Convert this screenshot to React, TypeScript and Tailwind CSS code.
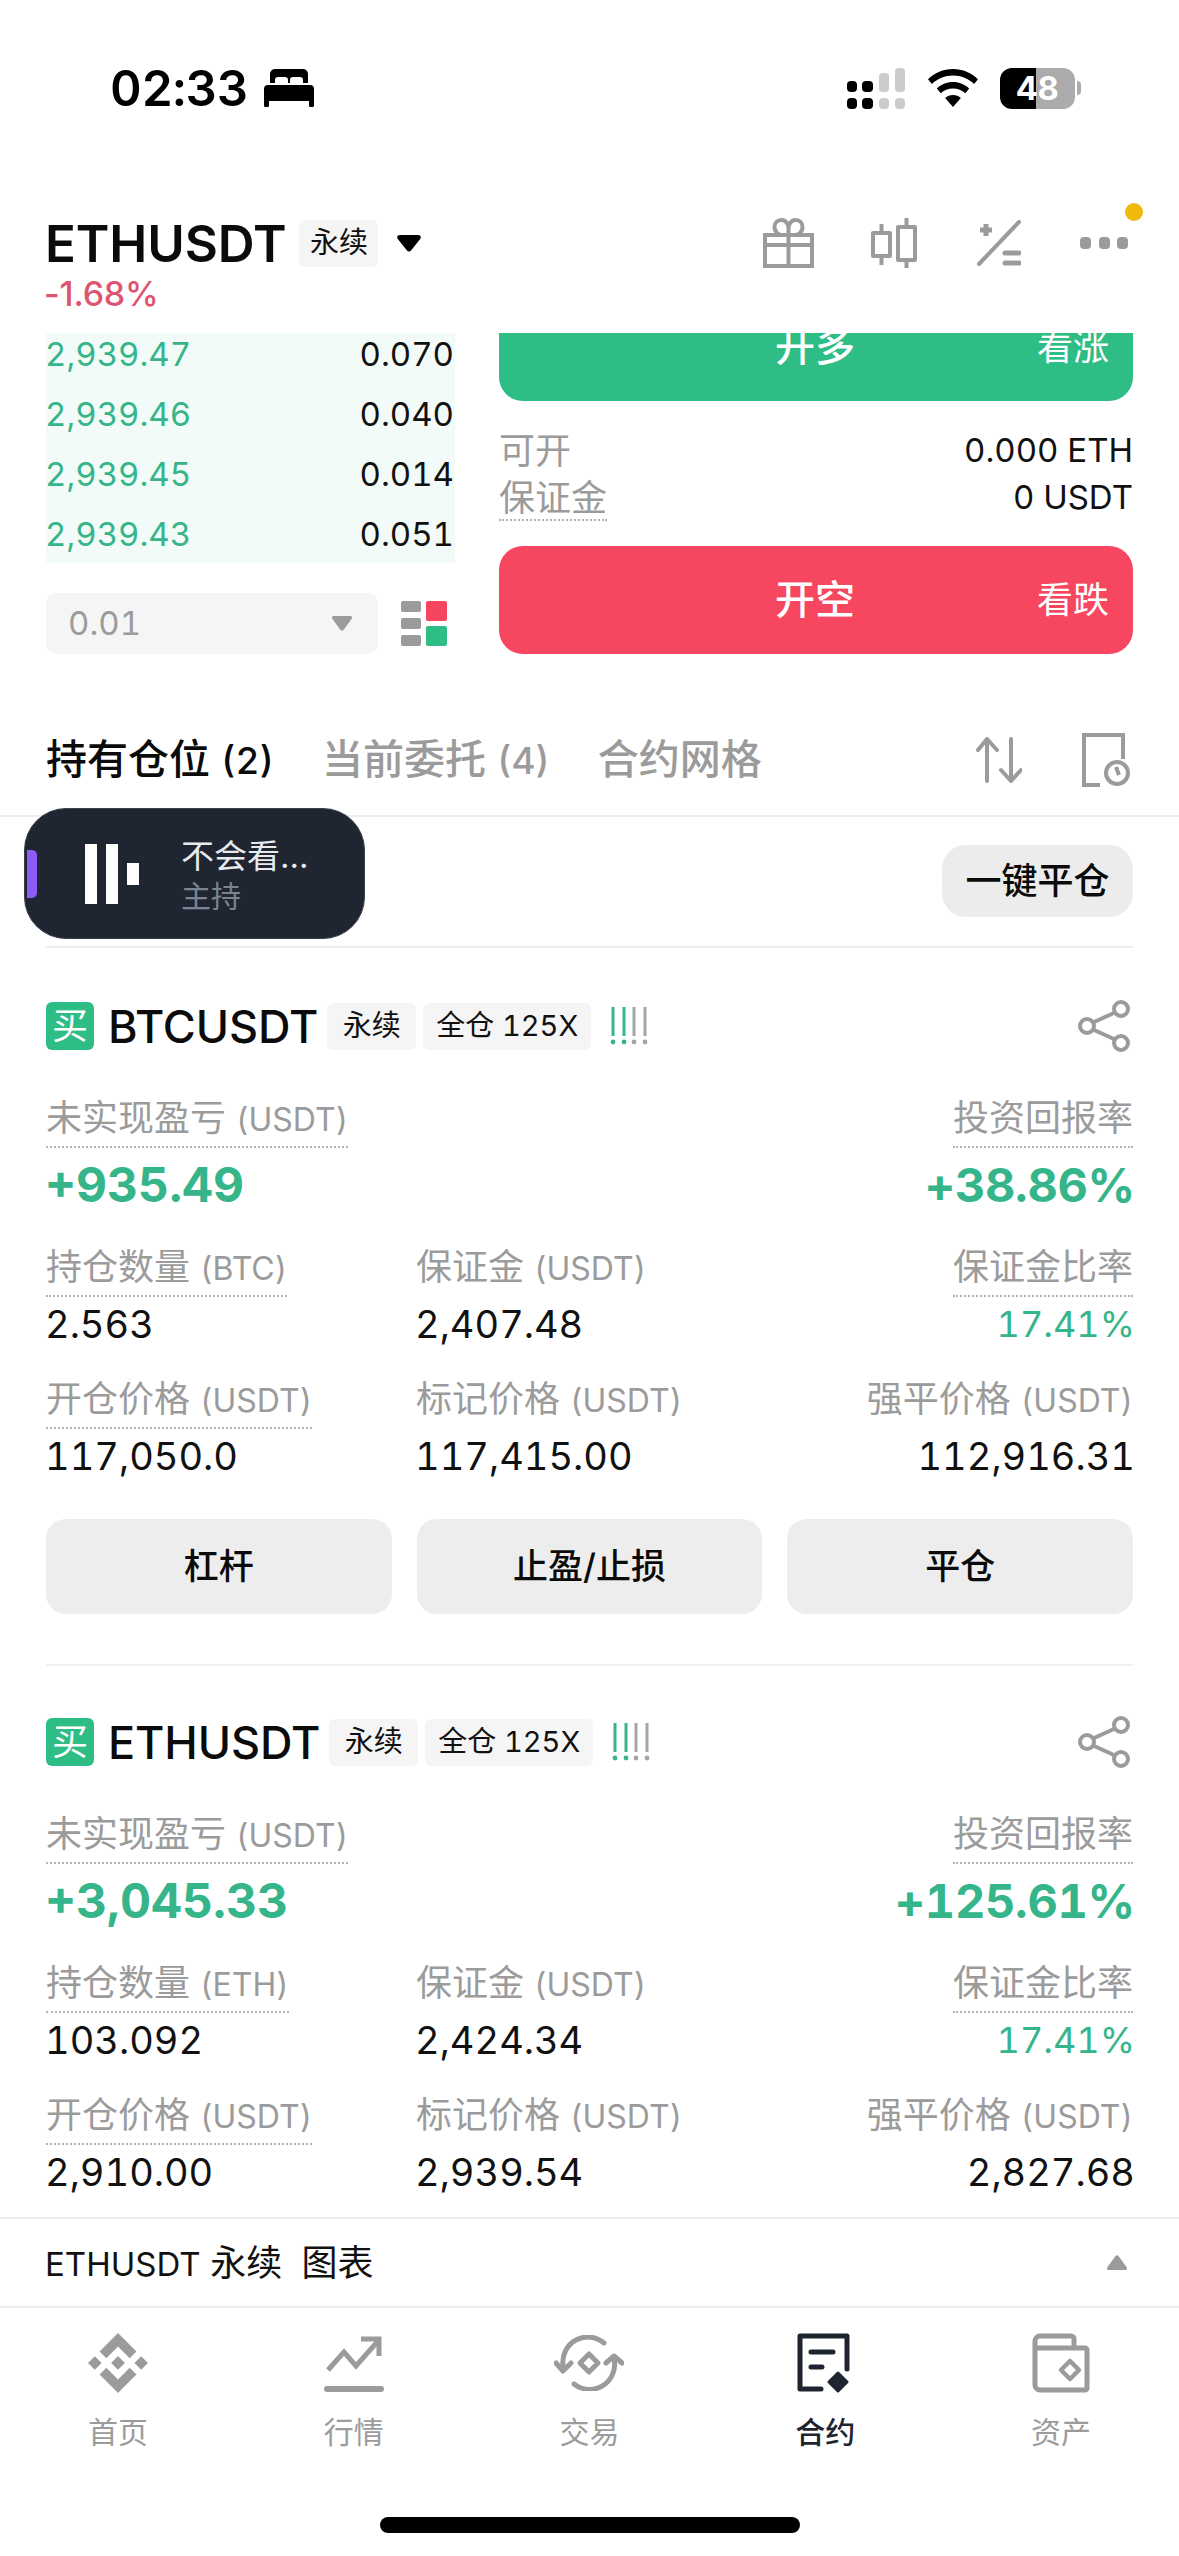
const GREY = '#9b9b9b';

const Tag = ({ children, className = '' }: { children: React.ReactNode; className?: string }) => (
  <span className={`flex h-[47px] items-center justify-center rounded-[6px] bg-[#f5f5f5] text-[29px] text-[#111] ${className}`}>
    {children}
  </span>
);

const Label = ({ text, dotted }: { text: string; dotted?: boolean }) => {
  const [cjk, latin] = text.split(' ');
  return (
    <div className="h-[56px]">
      <span className={`inline-block h-[56px] text-[36px] leading-[52px] whitespace-nowrap text-[#9b9b9b] ${dotted ? 'border-b-2 border-dotted border-[#b4b4b4]' : ''}`}>
        {cjk}
        {latin && <span className="ml-[10px] text-[32px]">{latin}</span>}
      </span>
    </div>
  );
};

const Stat = ({ label, value, dotted, right, green }: { label: string; value: string; dotted?: boolean; right?: boolean; green?: boolean }) => (
  <div className={right ? 'text-right' : ''}>
    <Label text={label} dotted={dotted} />
    <div className={`mt-[4px] h-[46px] leading-[46px] ${right ? '-mr-[2px]' : '-ml-[1px]'} ${green ? 'text-[36px] text-[#35b589]' : 'text-[38px] text-[#111]'}`}>{value}</div>
  </div>
);

function RiskBars() {
  return (
    <svg width="38" height="38" viewBox="0 0 38 38" className="ml-[19px]">
      {[3, 14, 24, 35].map((x, i) => (
        <g key={x} fill={i < 2 ? '#35b589' : '#a5a5a5'} stroke="none">
          <rect x={x - 1.5} y="0" width="3" height="29" />
          <circle cx={x} cy="35" r="2.4" />
        </g>
      ))}
    </svg>
  );
}

function ShareIcon() {
  return (
    <svg width="52" height="52" viewBox="0 0 52 52" fill="none" stroke={GREY} strokeWidth="4">
      <circle cx="43" cy="9" r="7" />
      <circle cx="9" cy="26" r="7" />
      <circle cx="43" cy="43" r="7" />
      <path d="M15 22.5 37 12.5M15 29.5 37 39.5" />
    </svg>
  );
}

function PositionCard({ symbol, pnl, roe, qtyLabel, qty, margin, entry, mark, liq, actions }: {
  symbol: string; pnl: string; roe: string; qtyLabel: string; qty: string; margin: string; entry: string; mark: string; liq: string; actions?: boolean;
}) {
  return (
    <div className="px-[46px] pt-[52px]">
      <div className="flex h-[48px] items-center">
        <span className="flex h-[48px] w-[48px] items-center justify-center rounded-[6px] bg-[#2ebd85] text-[36px] text-white">买</span>
        <span className="ml-[14px] text-[45px] leading-none font-medium tracking-[-0.1px] text-[#0b0b0b]">{symbol}</span>
        <Tag className="ml-[9px] w-[89px]">永续</Tag>
        <Tag className="ml-[7px] w-[168px]">全仓 125X</Tag>
        <RiskBars />
        <span className="ml-auto mr-[3px]"><ShareIcon /></span>
      </div>

      <div className="mt-[42px] flex justify-between">
        <div>
          <Label text="未实现盈亏 (USDT)" dotted />
          <div className="mt-[7px] -ml-[1px] h-[60px] text-[48px] leading-[60px] font-bold text-[#35b589]">{pnl}</div>
        </div>
        <div className="text-right">
          <Label text="投资回报率" dotted />
          <div className="mt-[7px] -mr-[2px] h-[60px] text-[47px] leading-[60px] font-bold tracking-[-0.3px] text-[#35b589]">{roe}</div>
        </div>
      </div>

      <div className="mt-[26px] grid grid-cols-[370px_1fr_auto]">
        <Stat label={qtyLabel} value={qty} dotted />
        <Stat label="保证金 (USDT)" value={margin} />
        <Stat label="保证金比率" value="17.41%" dotted right green />
      </div>

      <div className="mt-[26px] grid grid-cols-[370px_1fr_auto]">
        <Stat label="开仓价格 (USDT)" value={entry} dotted />
        <Stat label="标记价格 (USDT)" value={mark} />
        <Stat label="强平价格 (USDT)" value={liq} right />
      </div>

      {actions && (
        <div className="mt-[40px] grid h-[95px] grid-cols-3 gap-[25px]">
          {['杠杆', '止盈/止损', '平仓'].map((t) => (
            <button key={t} className="rounded-[20px] bg-[#ededed] text-[35px] font-medium text-[#0b0b0b]">{t}</button>
          ))}
        </div>
      )}
    </div>
  );
}

const BOOK = [
  ['2,939.47', '0.070'],
  ['2,939.46', '0.040'],
  ['2,939.45', '0.014'],
  ['2,939.43', '0.051'],
];

function NavIcon({ name }: { name: string }) {
  if (name === 'home') {
    return (
      <svg width="60" height="60" viewBox="0 0 126.61 126.61" fill={GREY}>
        <path d="M38.73 53.2l24.59-24.58 24.6 24.6 14.3-14.31L63.32 0l-38.9 38.9 14.31 14.3zM0 63.31l14.3-14.31 14.31 14.31-14.31 14.3zM38.73 73.41l24.59 24.59 24.6-24.6 14.31 14.29-38.9 38.91-38.91-38.88-.02-.02 14.33-14.29zM98 63.31l14.3-14.31 14.31 14.3-14.31 14.32zM77.83 63.3L63.32 48.78 52.59 59.51l-1.24 1.23-2.54 2.54 14.51 14.5 14.51-14.47z" />
      </svg>
    );
  }
  if (name === 'market') {
    return (
      <svg width="60" height="60" viewBox="0 0 60 60" fill="none" stroke={GREY} strokeWidth="5">
        <path d="M4 37 20 19l12 14L54 8" />
        <path d="M37 6h18v17" />
        <path d="M3 56h54" strokeLinecap="round" strokeWidth="6" />
      </svg>
    );
  }
  if (name === 'trade') {
    return (
      <svg width="70" height="56" viewBox="0 0 70 56" fill="none" stroke={GREY} strokeWidth="5" strokeLinecap="round" strokeLinejoin="round">
        <path d="M50 8A25 25 0 0 0 9 30" />
        <path d="M2 28l7 8 8-8" />
        <path d="M20 49A25 25 0 0 0 60 24" />
        <path d="M52 28l8-7 8 7" />
        <path d="M35 19l9 9-9 9-9-9z" strokeWidth="5" />
      </svg>
    );
  }
  if (name === 'contract') {
    return (
      <svg width="56" height="60" viewBox="0 0 56 60" fill="none" stroke="#1e2530" strokeWidth="5" strokeLinecap="round" strokeLinejoin="round">
        <path d="M24 56H3V3h47v33" />
        <path d="M14 19h22M14 34h11" />
        <path d="M41 40l9 9-9 9-9-9z" fill="#1e2530" strokeWidth="3" />
      </svg>
    );
  }
  return (
    <svg width="58" height="60" viewBox="0 0 58 60" fill="none" stroke={GREY} strokeWidth="5" strokeLinejoin="round">
      <path d="M3 14V8a5 5 0 0 1 5-5h31a3 3 0 0 1 3 3v9h11a2 2 0 0 1 2 2v38a2 2 0 0 1-2 2H8a5 5 0 0 1-5-5z" />
      <path d="M3 15h39" />
      <path d="M38 28l9 9-9 9-9-9z" strokeWidth="4.5" />
    </svg>
  );
}

const NAV = [
  { key: 'home', label: '首页' },
  { key: 'market', label: '行情' },
  { key: 'trade', label: '交易' },
  { key: 'contract', label: '合约' },
  { key: 'assets', label: '资产' },
];

export default function App() {
  return (
    <div className="relative flex h-[2556px] w-[1179px] flex-col overflow-hidden bg-white font-[Inter,'Noto_Sans_CJK_SC',sans-serif] tabular-nums">
      {/* status bar */}
      <div className="flex h-[176px] shrink-0 items-center pl-[110px] pr-[98px]">
        <span className="text-[49px] leading-none font-semibold tracking-[-0.3px] text-black">02:33</span>
        <svg width="50" height="38" viewBox="0 0 50 38" className="ml-[16px]" fill="#000">
          <path d="M6 14V5a5 5 0 0 1 5-5h28a5 5 0 0 1 5 5v9h-5v-3a3 3 0 0 0-3-3h-7a3 3 0 0 0-3 3v3h-2v-3a3 3 0 0 0-3-3h-7a3 3 0 0 0-3 3v3z" />
          <path d="M4 16h42a4 4 0 0 1 4 4v17a1.5 1.5 0 0 1-1.500 1h-2a1.500 1.500 0 0 1-1.500-1v-5H5v5a1.500 1.500 0 0 1-1.500 1h-2A1.500 1.500 0 0 1 0 37V20a4 4 0 0 1 4-4z" />
        </svg>
        <div className="ml-auto flex items-center">
          <svg width="58" height="41" viewBox="0 0 58 41">
            <rect x="0" y="13" width="10" height="11" rx="4" fill="#000" />
            <rect x="15" y="13" width="11" height="11" rx="4" fill="#000" />
            <rect x="32" y="5" width="10" height="19" rx="3.500" fill="#ccc" />
            <rect x="48" y="0" width="10" height="24" rx="3.500" fill="#ccc" />
            <rect x="0" y="30" width="10" height="11" rx="4" fill="#000" />
            <rect x="15" y="30" width="11" height="11" rx="4" fill="#000" />
            <rect x="32" y="30" width="10" height="11" rx="4" fill="#ccc" />
            <rect x="48" y="30" width="10" height="11" rx="4" fill="#ccc" />
          </svg>
          <svg width="50" height="38" viewBox="0 0 50 38" className="ml-[23px]" fill="#000">
            <path d="M25 0c9.800 0 18.500 3.900 25 10.200l-3.900 4.800C40.500 9.700 33.100 6.500 25 6.500S9.500 9.700 3.900 15L0 10.200C6.500 3.900 15.200 0 25 0z" />
            <path d="M25 13c6.300 0 12 2.500 16.200 6.500l-3.900 4.700C34.100 21.300 29.800 19.500 25 19.500s-9.100 1.800-12.300 4.700l-3.900-4.700C13 15.500 18.700 13 25 13z" />
            <path d="M25 26c3.100 0 5.800 1.100 7.900 3L25 38l-7.900-9c2.100-1.900 4.800-3 7.900-3z" />
          </svg>
          <div className="ml-[22px] flex h-[41px] w-[75px] items-center justify-center rounded-[12px] bg-[linear-gradient(to_right,#000_48%,#ababab_48%)] text-[33px] leading-none font-bold text-white">
            48
          </div>
          <span className="ml-[2px] h-[14px] w-[4px] rounded-r-full bg-[#ababab]" />
        </div>
      </div>

      {/* symbol header */}
      <div className="relative h-[157px] shrink-0 pl-[46px] pr-[51px] pt-[44px]">
        <div className="flex h-[46px] items-center">
          <span className="-ml-[1px] text-[51px] leading-none font-semibold tracking-[-0.1px] text-[#0b0b0b]">ETHUSDT</span>
          <Tag className="ml-[13px] w-[79px]">永续</Tag>
          <svg width="24" height="17" viewBox="0 0 24 17" className="ml-[19px]" fill="#000">
            <path d="M3 0h18c2.500 0 3.600 2 2.200 4L14 15.500c-1 1.300-3 1.300-4 0L.8 4C-.6 2 .5 0 3 0z" />
          </svg>
          <div className="ml-auto flex items-center">
            <svg width="51" height="50" viewBox="0 0 51 50" fill="none" stroke={GREY} strokeWidth="4">
              <path d="M2 17h47v31H2zM2 27h47M25.500 17v31" />
              <path d="M25.500 17v-7c0-4-3-8-7-8s-7 3-7 7c0 5 4 8 8 8M25.500 10c0-4 3-8 7-8s7 3 7 7c0 5-4 8-8 8" />
            </svg>
            <svg width="46" height="50" viewBox="0 0 46 50" fill="none" stroke={GREY} strokeWidth="4" strokeLinejoin="round" className="ml-[57px]">
              <path d="M2 15h17v23H2zM10.500 6v9M10.500 38v9" />
              <path d="M27 9h17v33H27zM35.500 0v9M35.500 42v8" />
            </svg>
            <svg width="44" height="46" viewBox="0 0 44 46" fill="none" stroke={GREY} strokeWidth="4" strokeLinecap="round" className="ml-[60px]">
              <path d="M42 2 2 44" />
              <path d="M3 10h12M9 4v12" strokeLinecap="butt" strokeWidth="5" />
              <path d="M28 33h14M28 43h14" strokeWidth="5" />
            </svg>
            <svg width="48" height="12" viewBox="0 0 48 12" fill={GREY} className="ml-[59px]">
              <rect x="0" y="0" width="11" height="12" rx="4" />
              <rect x="19" y="0" width="11" height="12" rx="4" />
              <rect x="37" y="0" width="11" height="12" rx="4" />
            </svg>
          </div>
        </div>
        <div className="mt-[12px] -ml-[2px] text-[34px] leading-[32px] font-medium tracking-[-0.2px] text-[#dc5570] [font-variant-numeric:proportional-nums]">-1.68%</div>
        <span className="absolute right-[36px] top-[27px] h-[18px] w-[18px] rounded-full bg-[#f0b90b]" />
      </div>

      {/* scrolled content */}
      <div className="min-h-0 flex-1 overflow-hidden">
        <div className="flex gap-[44px] pl-[46px]">
          <div className="w-[409px]">
            <div className="h-[230px] overflow-hidden bg-[#f3fbf8]">
              {BOOK.map(([price, size]) => (
                <div key={price} className="flex h-[60px] items-center justify-between pr-[1px] text-[33px] first:-mt-[8px]">
                  <span className="-ml-[1px] text-[#35b589]">{price}</span>
                  <span className="text-[#111]">{size}</span>
                </div>
              ))}
            </div>
            <div className="mt-[30px] flex items-center">
              <div className="flex h-[61px] w-[332px] items-center justify-between rounded-[10px] bg-[#f5f5f5] pl-[22px] pr-[26px] text-[33px] text-[#9b9b9b]">
                0.01
                <svg width="20" height="15" viewBox="0 0 20 15" fill={GREY}><path d="M2 0h16c2 0 2.500 1.500 1.500 3L11.500 14c-.8 1-2.200 1-3 0L.5 3C-.5 1.500 0 0 2 0z" /></svg>
              </div>
              <svg width="46" height="45" viewBox="0 0 46 45" className="ml-[23px]">
                <rect x="0" y="0" width="20" height="11" rx="2" fill={GREY} />
                <rect x="0" y="17" width="20" height="11" rx="2" fill={GREY} />
                <rect x="0" y="34" width="20" height="11" rx="2" fill={GREY} />
                <rect x="25" y="0" width="21" height="20" rx="2" fill="#f6465d" />
                <rect x="25" y="25" width="21" height="20" rx="2" fill="#2ebd85" />
              </svg>
            </div>
          </div>

          <div className="w-[634px]">
            <button className="-mt-[40px] flex h-[108px] w-full items-center rounded-[24px] bg-[#2ebd85] pr-[24px] text-white">
              <span className="ml-[276px] text-[40px] font-medium">开多</span>
              <span className="ml-auto text-[36px]">看涨</span>
            </button>
            <div className="mt-[27px] flex h-[46px] items-center justify-between text-[33px] text-[#111]">
              <span className="text-[36px] text-[#9b9b9b]">可开</span>
              0.000 ETH
            </div>
            <div className="flex h-[48px] items-center justify-between text-[33px] text-[#111]">
              <span className="h-[45px] border-b-2 border-dotted border-[#b4b4b4] text-[36px] leading-[44px] text-[#9b9b9b]">保证金</span>
              0 USDT
            </div>
            <button className="mt-[24px] flex h-[108px] w-full items-center rounded-[24px] bg-[#f7465f] pr-[24px] text-white">
              <span className="ml-[276px] text-[40px] font-medium">开空</span>
              <span className="ml-auto text-[36px]">看跌</span>
            </button>
          </div>
        </div>

        {/* tabs */}
        <div className="flex h-[163px] items-center border-b-2 border-[#eeeeee] pl-[46px] pr-[49px] pt-[50px] text-[41px] font-medium text-[#9b9b9b]">
          <span className="text-[#0b0b0b]">持有仓位 <span className="text-[37px]">(2)</span></span>
          <span className="ml-[48px]">当前委托 <span className="text-[37px]">(4)</span></span>
          <span className="ml-[48px]">合约网格</span>
          <svg width="46" height="46" viewBox="0 0 46 46" fill="none" stroke={GREY} strokeWidth="4" strokeLinecap="round" strokeLinejoin="round" className="ml-auto">
            <path d="M11 44V2M2 13 11 2l10 11" />
            <path d="M35 2v42M25 33l10 11 10-11" />
          </svg>
          <svg width="48" height="54" viewBox="0 0 48 54" fill="none" stroke={GREY} strokeWidth="4" className="ml-[60px]">
            <path d="M18 52H2V2h39v24" />
            <circle cx="35" cy="40" r="11" />
            <path d="M34 34l3 8" />
          </svg>
        </div>

        {/* close all */}
        <div className="mx-[46px] flex h-[131px] justify-end border-b-2 border-[#eeeeee] pt-[28px] mb-[2px]">
          <button className="h-[72px] w-[191px] rounded-[24px] bg-[#ececec] text-[36px] font-medium text-[#0b0b0b]">一键平仓</button>
        </div>

        <PositionCard symbol="BTCUSDT" pnl="+935.49" roe="+38.86%" qtyLabel="持仓数量 (BTC)" qty="2.563" margin="2,407.48" entry="117,050.0" mark="117,415.00" liq="112,916.31" actions />
        <div className="mx-[46px] mt-[50px] h-[2px] bg-[#f2f2f2]" />
        <PositionCard symbol="ETHUSDT" pnl="+3,045.33" roe="+125.61%" qtyLabel="持仓数量 (ETH)" qty="103.092" margin="2,424.34" entry="2,910.00" mark="2,939.54" liq="2,827.68" />
      </div>

      {/* chart bar */}
      <div className="flex h-[91px] shrink-0 items-center justify-between border-y-2 border-[#eeeeee] pl-[45px] pr-[52px] text-[36px] text-[#111]">
        <span><span className="text-[33px]">ETHUSDT</span> 永续&nbsp;&nbsp;图表</span>
        <svg width="20" height="15" viewBox="0 0 20 15" fill={GREY}><path d="M2 15h16c2 0 2.500-1.500 1.500-3L11.500 1c-.8-1-2.200-1-3 0L.5 12C-.5 13.500 0 15 2 15z" /></svg>
      </div>

      {/* bottom nav */}
      <div className="h-[248px] shrink-0">
        <div className="grid grid-cols-5 pt-[25px]">
          {NAV.map((item) => (
            <div key={item.key} className={`flex flex-col items-center text-[30px] ${item.key === 'contract' ? 'font-medium text-[#1e2530]' : 'text-[#9b9b9b]'}`}>
              <div className="flex h-[60px] items-center"><NavIcon name={item.key} /></div>
              <span className="mt-[23px] leading-[32px]">{item.label}</span>
            </div>
          ))}
        </div>
        <div className="mx-auto mt-[69px] h-[16px] w-[420px] rounded-full bg-black" />
      </div>

      {/* floating podcast player */}
      <div className="absolute left-[24px] top-[808px] flex h-[131px] w-[341px] items-center rounded-[42px] border border-[#3a4150] bg-[#1f2531]">
        <span className="absolute left-[2px] top-[41px] h-[48px] w-[10px] rounded-r-[5px] bg-[#8b5cf6]" />
        <div className="ml-[60px] flex items-center gap-[9px]">
          <span className="h-[60px] w-[12px] bg-white" />
          <span className="h-[60px] w-[12px] bg-white" />
          <span className="h-[22px] w-[12px] bg-white" />
        </div>
        <div className="ml-[42px]">
          <div className="text-[33px] leading-[40px] text-[#e8eaed]">不会看<span className="tracking-[4px]">…</span></div>
          <div className="mt-[4px] text-[30px] leading-[32px] text-[#7c8490]">主持</div>
        </div>
      </div>
    </div>
  );
}
